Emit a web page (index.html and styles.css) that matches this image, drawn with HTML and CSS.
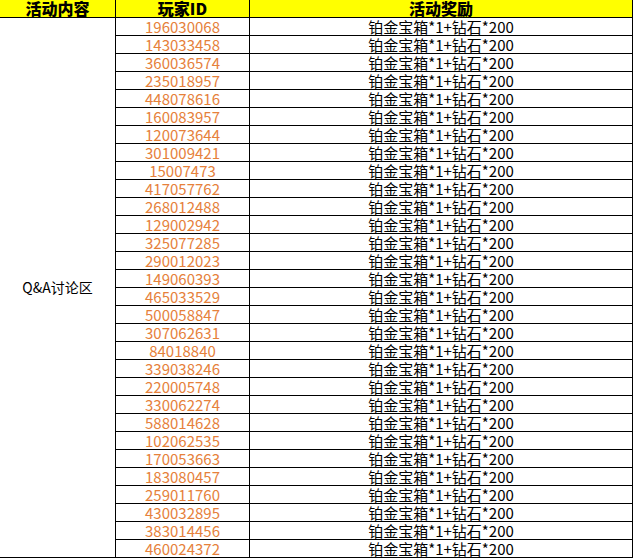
FILE: index.html
```html
<!DOCTYPE html>
<html lang="zh-CN">
<head>
<meta charset="utf-8">
<title>活动奖励</title>
<link rel="stylesheet" href="styles.css">
</head>
<body>
<table class="sheet">
  <colgroup>
    <col class="c1"><col class="c2"><col class="c3">
  </colgroup>
  <thead>
    <tr><th>活动内容</th><th>玩家ID</th><th>活动奖励</th></tr>
  </thead>
  <tbody>
    <tr><td class="topic" rowspan="30">Q&amp;A讨论区</td><td class="pid">196030068</td><td class="reward">铂金宝箱*1+钻石*200</td></tr>
    <tr><td class="pid">143033458</td><td class="reward">铂金宝箱*1+钻石*200</td></tr>
    <tr><td class="pid">360036574</td><td class="reward">铂金宝箱*1+钻石*200</td></tr>
    <tr><td class="pid">235018957</td><td class="reward">铂金宝箱*1+钻石*200</td></tr>
    <tr><td class="pid">448078616</td><td class="reward">铂金宝箱*1+钻石*200</td></tr>
    <tr><td class="pid">160083957</td><td class="reward">铂金宝箱*1+钻石*200</td></tr>
    <tr><td class="pid">120073644</td><td class="reward">铂金宝箱*1+钻石*200</td></tr>
    <tr><td class="pid">301009421</td><td class="reward">铂金宝箱*1+钻石*200</td></tr>
    <tr><td class="pid">15007473</td><td class="reward">铂金宝箱*1+钻石*200</td></tr>
    <tr><td class="pid">417057762</td><td class="reward">铂金宝箱*1+钻石*200</td></tr>
    <tr><td class="pid">268012488</td><td class="reward">铂金宝箱*1+钻石*200</td></tr>
    <tr><td class="pid">129002942</td><td class="reward">铂金宝箱*1+钻石*200</td></tr>
    <tr><td class="pid">325077285</td><td class="reward">铂金宝箱*1+钻石*200</td></tr>
    <tr><td class="pid">290012023</td><td class="reward">铂金宝箱*1+钻石*200</td></tr>
    <tr><td class="pid">149060393</td><td class="reward">铂金宝箱*1+钻石*200</td></tr>
    <tr><td class="pid">465033529</td><td class="reward">铂金宝箱*1+钻石*200</td></tr>
    <tr><td class="pid">500058847</td><td class="reward">铂金宝箱*1+钻石*200</td></tr>
    <tr><td class="pid">307062631</td><td class="reward">铂金宝箱*1+钻石*200</td></tr>
    <tr><td class="pid">84018840</td><td class="reward">铂金宝箱*1+钻石*200</td></tr>
    <tr><td class="pid">339038246</td><td class="reward">铂金宝箱*1+钻石*200</td></tr>
    <tr><td class="pid">220005748</td><td class="reward">铂金宝箱*1+钻石*200</td></tr>
    <tr><td class="pid">330062274</td><td class="reward">铂金宝箱*1+钻石*200</td></tr>
    <tr><td class="pid">588014628</td><td class="reward">铂金宝箱*1+钻石*200</td></tr>
    <tr><td class="pid">102062535</td><td class="reward">铂金宝箱*1+钻石*200</td></tr>
    <tr><td class="pid">170053663</td><td class="reward">铂金宝箱*1+钻石*200</td></tr>
    <tr><td class="pid">183080457</td><td class="reward">铂金宝箱*1+钻石*200</td></tr>
    <tr><td class="pid">259011760</td><td class="reward">铂金宝箱*1+钻石*200</td></tr>
    <tr><td class="pid">430032895</td><td class="reward">铂金宝箱*1+钻石*200</td></tr>
    <tr><td class="pid">383014456</td><td class="reward">铂金宝箱*1+钻石*200</td></tr>
    <tr><td class="pid">460024372</td><td class="reward">铂金宝箱*1+钻石*200</td></tr>
  </tbody>
</table>
</body>
</html>
```
FILE: styles.css
```css
html, body {
  margin: 0;
  padding: 0;
  background: #ffffff;
}

.sheet {
  border-collapse: separate;
  border-spacing: 0;
  table-layout: fixed;
  width: 633px;
  font-family: "Noto Sans CJK SC", "Noto Sans", sans-serif;
  color: #000000;
}

.c1 { width: 116px; }
.c2 { width: 134px; }
.c3 { width: 383px; }

.sheet th,
.sheet td {
  box-sizing: border-box;
  height: 18px;
  padding: 0;
  border-right: 1px solid #000000;
  border-bottom: 1px solid #000000;
  text-align: center;
  vertical-align: middle;
  white-space: nowrap;
  line-height: 17px;
}

.sheet th {
  background: #ffff00;
  font-size: 16px;
  font-weight: 900;
}

.sheet td {
  font-size: 15px;
}

.sheet td.topic {
  font-size: 14px;
}

.sheet td.pid {
  color: #e6813b;
}
```
